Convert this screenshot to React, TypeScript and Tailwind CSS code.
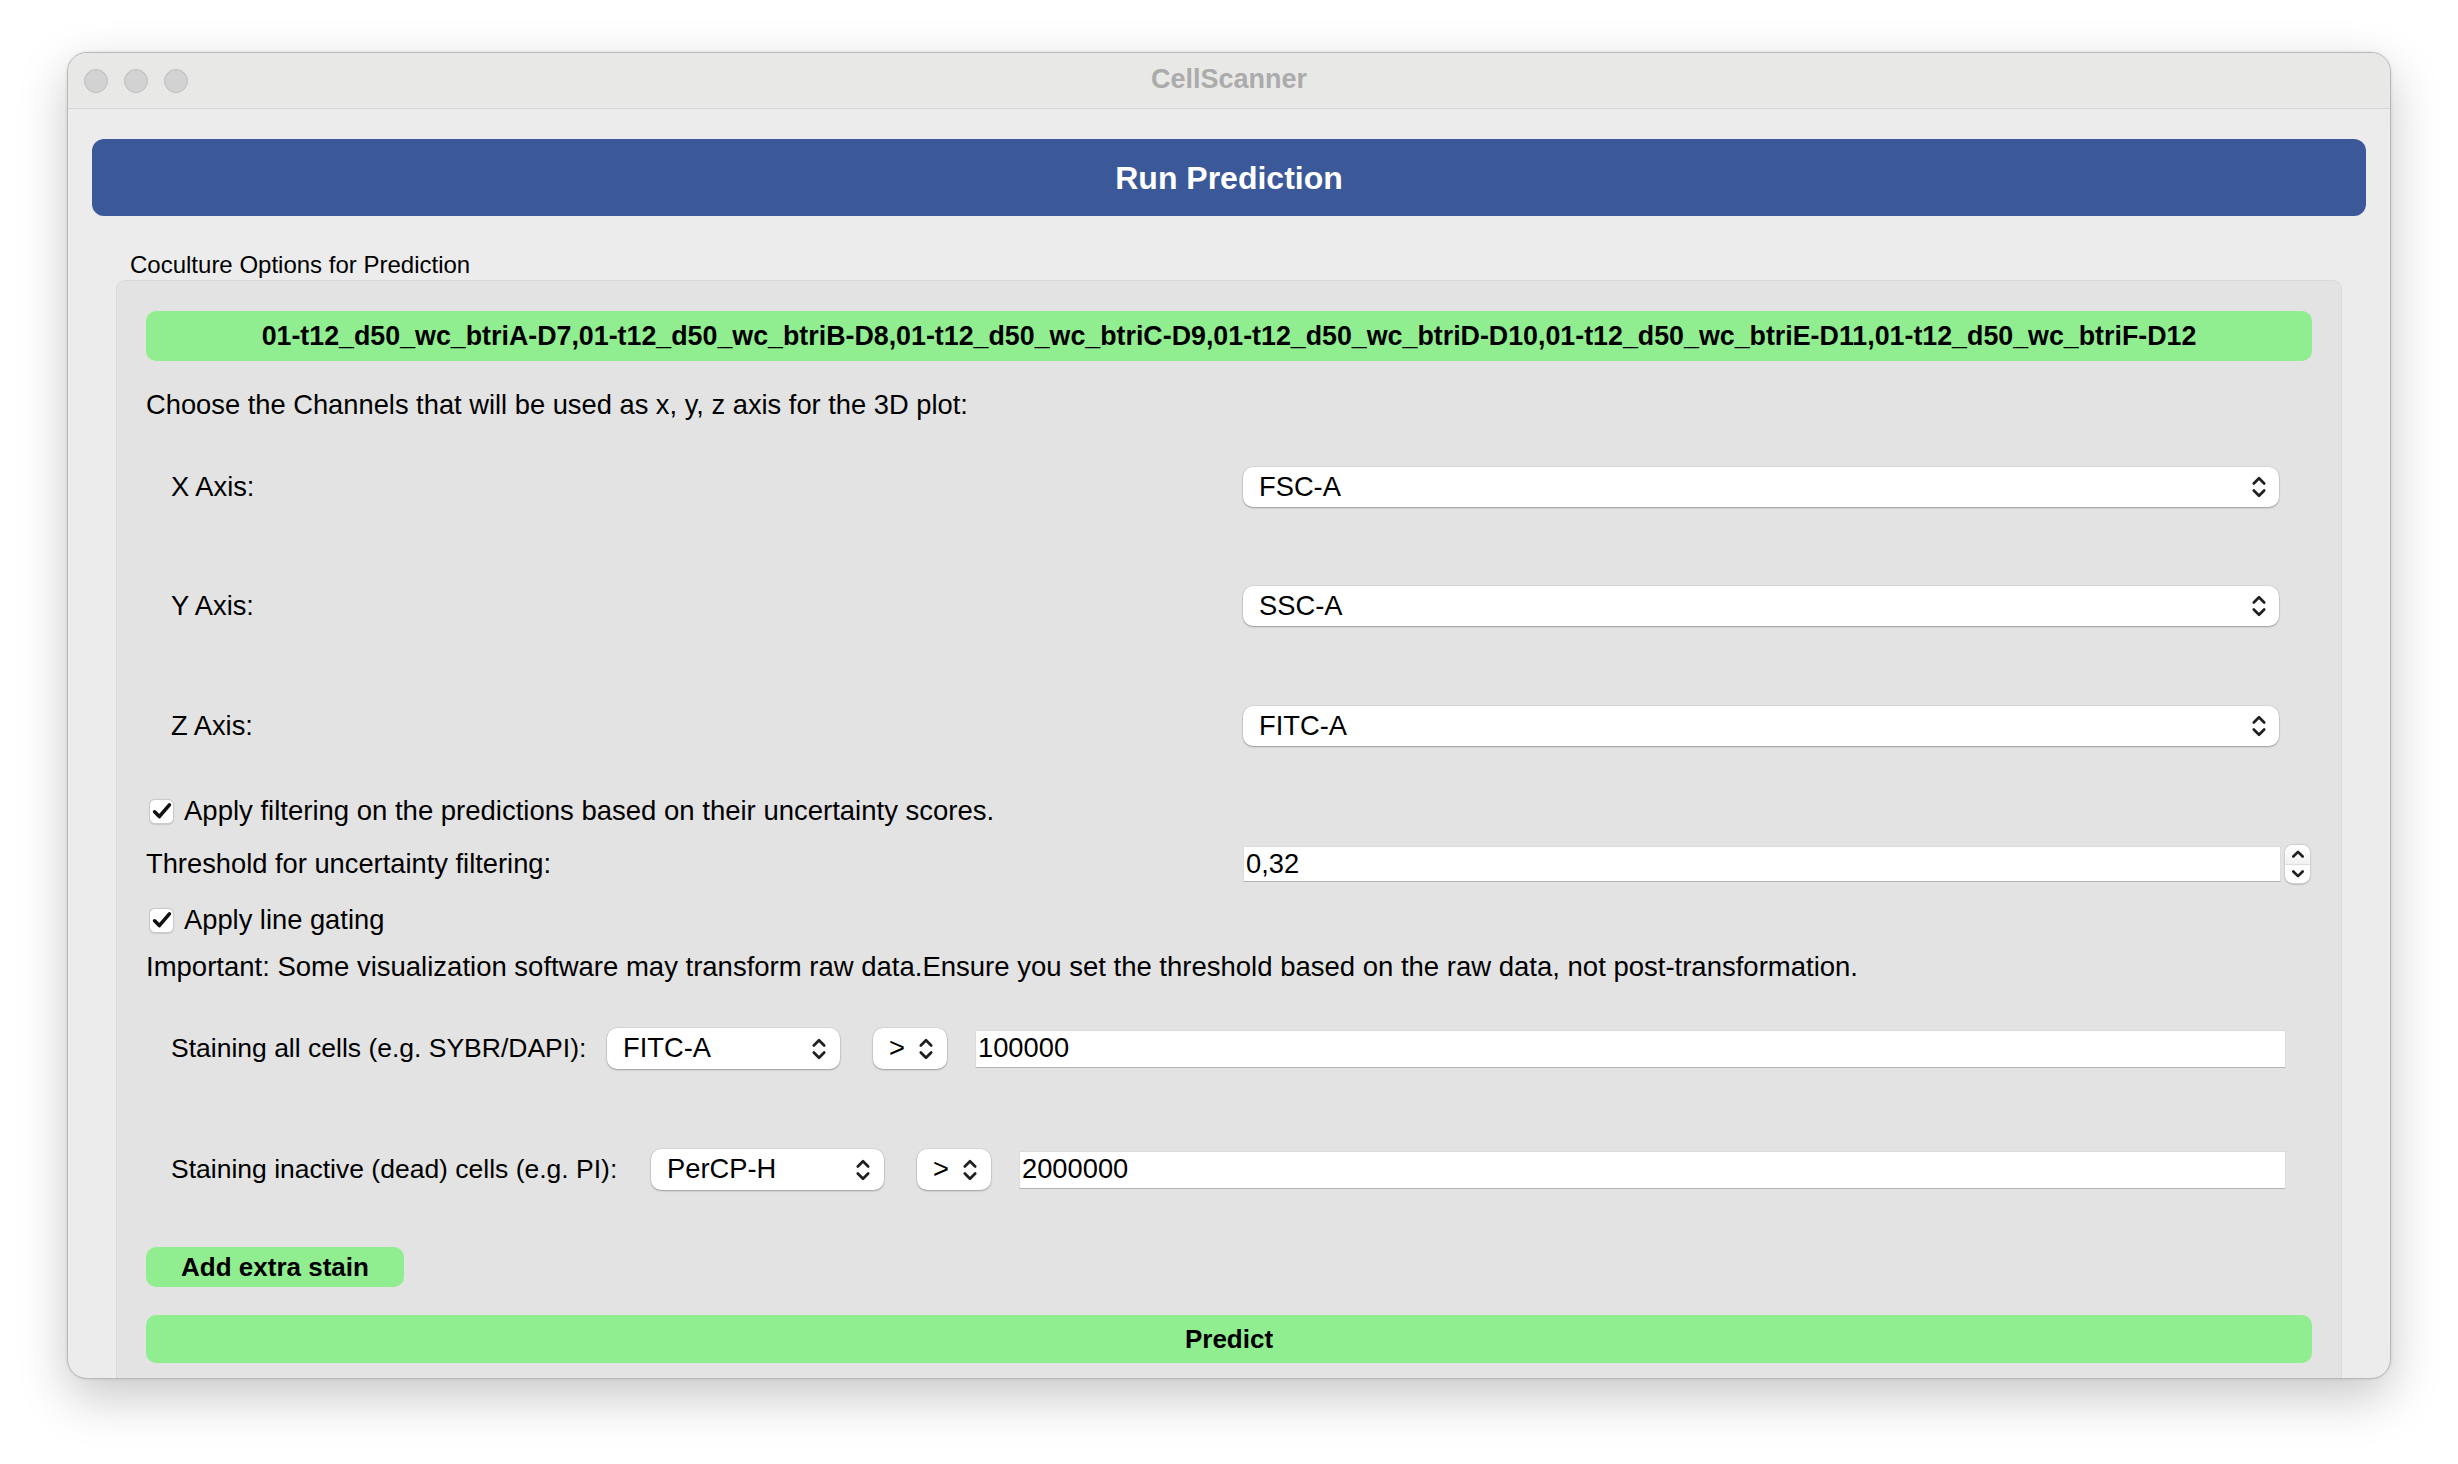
import React from "react";

function UpDown({ stroke = "#1f1f1f" }: { stroke?: string }) {
  return (
    <svg
      width="16"
      height="26"
      viewBox="0 0 16 26"
      fill="none"
      stroke={stroke}
      strokeWidth="2.7"
      strokeLinecap="round"
      strokeLinejoin="round"
    >
      <path d="M2.8 9.5 L8 4.3 L13.2 9.5" />
      <path d="M2.8 16.5 L8 21.7 L13.2 16.5" />
    </svg>
  );
}

function Combo({
  value,
  className = "",
  pr = "pr-[12px]",
}: {
  value: string;
  className?: string;
  pr?: string;
}) {
  return (
    <div
      className={`flex items-center justify-between rounded-[10px] bg-white pl-[16px] ${pr} text-[27.3px] text-black shadow-[0_1px_2px_rgba(0,0,0,0.28),0_0_0_0.5px_rgba(0,0,0,0.1)] ${className}`}
    >
      <span>{value}</span>
      <UpDown />
    </div>
  );
}

function CheckBox() {
  return (
    <div className="flex h-[25px] w-[25px] items-center justify-center rounded-[6px] border border-[#cacaca] bg-white shadow-[0_0.5px_1px_rgba(0,0,0,0.12)]">
      <svg width="20" height="18" viewBox="0 0 20 18" fill="none">
        <path
          d="M2.6 9.8 L7.3 14.6 L17.4 2.8"
          stroke="#111"
          strokeWidth="3.6"
          strokeLinecap="round"
          strokeLinejoin="round"
        />
      </svg>
    </div>
  );
}

function LineEdit({ value, className = "" }: { value: string; className?: string }) {
  return (
    <div
      className={`flex items-center border border-[#dcdcdc] border-b-[#b4b4b4] bg-white pl-[2px] text-[27.3px] text-black ${className}`}
    >
      {value}
    </div>
  );
}

function SpinButtons() {
  return (
    <div className="flex h-[40px] w-[27px] flex-col overflow-hidden rounded-[9px] border border-[#cfcfcf] bg-white shadow-[0_0.5px_1px_rgba(0,0,0,0.15)]">
      <div className="flex flex-1 items-center justify-center border-b border-[#dedede] bg-gradient-to-b from-white to-[#f1f1f1]">
        <svg width="14" height="10" viewBox="0 0 14 10" fill="none">
          <path d="M2.3 7.5 L7 2.8 L11.7 7.5" stroke="#1f1f1f" strokeWidth="2.6" strokeLinecap="round" strokeLinejoin="round" />
        </svg>
      </div>
      <div className="flex flex-1 items-center justify-center">
        <svg width="14" height="10" viewBox="0 0 14 10" fill="none">
          <path d="M2.3 2.5 L7 7.2 L11.7 2.5" stroke="#1f1f1f" strokeWidth="2.6" strokeLinecap="round" strokeLinejoin="round" />
        </svg>
      </div>
    </div>
  );
}

function AxisRow({ label, value, mt }: { label: string; value: string; mt: string }) {
  return (
    <div className={`${mt} flex h-[40px] items-center`}>
      <div className="w-[1097px] pl-[25px] text-[27.3px] text-black">{label}</div>
      <Combo value={value} className="h-[40px] w-[1036px]" />
    </div>
  );
}

function StainRow({
  label,
  channel,
  value,
  labelWidth,
  mt,
}: {
  label: string;
  channel: string;
  value: string;
  labelWidth: string;
  mt: string;
}) {
  return (
    <div className={`${mt} flex h-[41px] items-center`}>
      <div className={`${labelWidth} shrink-0 pl-[25px] text-[26.5px] text-black`}>{label}</div>
      <Combo value={channel} className="h-[41px] w-[233px] shrink-0" pr="pr-[13px]" />
      <Combo value=">" className="ml-[33px] h-[41px] w-[74px] shrink-0" pr="pr-[13px]" />
      <LineEdit value={value} className="ml-[28px] mr-[26px] h-[38px] flex-1" />
    </div>
  );
}

export default function App() {
  const samples =
    "01-t12_d50_wc_btriA-D7,01-t12_d50_wc_btriB-D8,01-t12_d50_wc_btriC-D9,01-t12_d50_wc_btriD-D10,01-t12_d50_wc_btriE-D11,01-t12_d50_wc_btriF-D12";

  return (
    <div className="h-[1464px] w-full overflow-hidden bg-white pl-[67px] pt-[52px] font-['Liberation_Sans',Arial,sans-serif]">
      <div className="flex h-[1327px] w-[2324px] flex-col overflow-hidden rounded-[20px] border border-[#b9b9b9] bg-[#ececec] shadow-[0_18px_50px_rgba(0,0,0,0.22),0_0_3px_rgba(0,0,0,0.12)]">
        {/* Title bar */}
        <div className="grid h-[56px] shrink-0 grid-cols-[1fr_auto_1fr] items-center border-b border-[#d4d4d4] bg-[#e8e8e6]">
          <div className="flex items-center gap-[16px] pl-[16px]">
            <div className="h-[24px] w-[24px] rounded-full border border-[#bdbdbd] bg-[#d2d2d2]" />
            <div className="h-[24px] w-[24px] rounded-full border border-[#bdbdbd] bg-[#d2d2d2]" />
            <div className="h-[24px] w-[24px] rounded-full border border-[#bdbdbd] bg-[#d2d2d2]" />
          </div>
          <div className="pb-[2px] text-[27px] font-bold text-[#ababab]">CellScanner</div>
          <div />
        </div>

        {/* Content */}
        <div className="flex min-h-0 flex-1 flex-col px-[24px] pt-[30px]">
          <div className="flex h-[77px] shrink-0 items-center justify-center rounded-[12px] bg-[#3b5998] text-[32px] font-bold text-white">
            Run Prediction
          </div>

          <div className="mt-[35px] flex h-[28px] shrink-0 items-center pl-[38px] text-[24px] text-black">
            Coculture Options for Prediction
          </div>

          {/* Group box */}
          <div className="mx-[24px] mt-[1px] flex min-h-0 flex-1 flex-col rounded-t-[9px] border border-b-0 border-[#d9d9d9] bg-[#e3e3e3] px-[29px] pt-[30px]">
            <div className="flex h-[50px] shrink-0 items-center justify-center rounded-[10px] bg-[#90ee90] text-[26.8px] font-bold text-black">
              {samples}
            </div>

            <div className="mt-[20px] flex h-[48px] shrink-0 items-center text-[27.3px] text-black">
              Choose the Channels that will be used as x, y, z axis for the 3D plot:
            </div>

            <AxisRow label="X Axis:" value="FSC-A" mt="mt-[38px]" />
            <AxisRow label="Y Axis:" value="SSC-A" mt="mt-[79px]" />
            <AxisRow label="Z Axis:" value="FITC-A" mt="mt-[80px]" />

            <div className="mt-[47px] flex h-[36px] shrink-0 items-center gap-[10px] pl-[3px] text-[27.5px] text-black">
              <CheckBox />
              <span>Apply filtering on the predictions based on their uncertainty scores.</span>
            </div>

            <div className="mt-[15px] flex h-[40px] shrink-0 items-center">
              <div className="w-[1097px] text-[27.3px] text-black">Threshold for uncertainty filtering:</div>
              <LineEdit value="0,32" className="h-[36px] w-[1038px]" />
              <div className="ml-[3px]">
                <SpinButtons />
              </div>
            </div>

            <div className="mt-[18px] flex h-[36px] shrink-0 items-center gap-[10px] pl-[3px] text-[27.3px] text-black">
              <CheckBox />
              <span>Apply line gating</span>
            </div>

            <div className="mt-[11px] flex h-[36px] shrink-0 items-center text-[27.5px] text-black">
              Important: Some visualization software may transform raw data.Ensure you set the threshold based on the raw data, not post-transformation.
            </div>

            <StainRow
              label="Staining all cells (e.g. SYBR/DAPI):"
              channel="FITC-A"
              value="100000"
              labelWidth="w-[461px]"
              mt="mt-[43px]"
            />
            <StainRow
              label="Staining inactive (dead) cells (e.g. PI):"
              channel="PerCP-H"
              value="2000000"
              labelWidth="w-[505px]"
              mt="mt-[80px]"
            />

            <div className="mt-[57px] flex h-[40px] w-[258px] shrink-0 items-center justify-center rounded-[10px] bg-[#90ee90] text-[26px] font-bold text-black">
              Add extra stain
            </div>

            <div className="mt-[28px] flex h-[48px] shrink-0 items-center justify-center rounded-[10px] bg-[#90ee90] text-[26px] font-bold text-black">
              Predict
            </div>
          </div>
        </div>
      </div>
    </div>
  );
}
